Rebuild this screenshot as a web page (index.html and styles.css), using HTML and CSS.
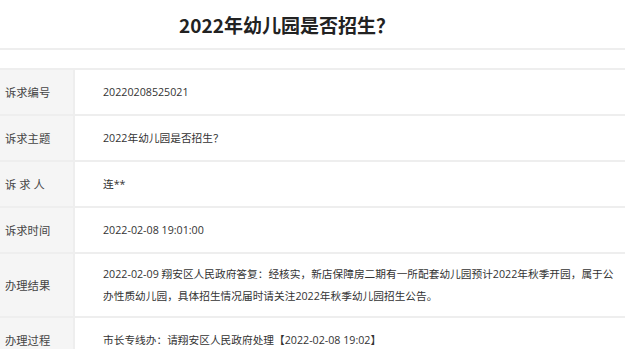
FILE: index.html
```html
<!DOCTYPE html>
<html lang="zh">
<head>
    <meta charset="UTF-8">
    <meta name="viewport" content="width=device-width, initial-scale=1.0">
    <link rel="stylesheet" href="styles.css">
</head>
<body>
    <div class="detail">
        <div class="detail-head">
            <h1 class="detail-title">2022年幼儿园是否招生？</h1>
        </div>
        <div class="detail-gap"></div>
        <div class="info-table">
            <div class="info-row">
                <div class="info-label">诉求编号</div>
                <div class="info-value">20220208525021</div>
            </div>
            <div class="info-row">
                <div class="info-label">诉求主题</div>
                <div class="info-value">2022年幼儿园是否招生？</div>
            </div>
            <div class="info-row">
                <div class="info-label spaced">诉 求 人</div>
                <div class="info-value">连**</div>
            </div>
            <div class="info-row">
                <div class="info-label">诉求时间</div>
                <div class="info-value">2022-02-08 19:01:00</div>
            </div>
            <div class="info-row tall">
                <div class="info-label">办理结果</div>
                <div class="info-value">2022-02-09 翔安区人民政府答复：经核实，新店保障房二期有一所配套幼儿园预计2022年秋季开园，属于公办性质幼儿园，具体招生情况届时请关注2022年秋季幼儿园招生公告。</div>
            </div>
            <div class="info-row">
                <div class="info-label">办理过程</div>
                <div class="info-value">市长专线办：请翔安区人民政府处理【2022-02-08 19:02】</div>
            </div>
        </div>
    </div>
</body>
</html>
```

FILE: styles.css
```css
body {
    margin: 0;
    background: #fff;
    font-family: "Open Sans", "Noto Sans CJK SC", sans-serif;
    color: #333;
}
.detail {
    width: 100%;
}
.detail-head {
    height: 48px;
    border-bottom: 2px solid #eeeeee;
    display: flex;
    align-items: center;
    justify-content: center;
    padding-right: 51px;
}
.detail-title {
    margin: 0;
    font-family: "Noto Sans CJK SC", sans-serif;
    font-size: 19px;
    font-weight: bold;
    color: #222;
}
.detail-gap {
    height: 18px;
    border-bottom: 2px solid #eeeeee;
}
.info-row {
    display: flex;
    min-height: 44px;
    border-bottom: 2px solid #eeeeee;
}
.info-row.tall {
    min-height: 62px;
}
.info-label {
    width: 75px;
    flex-shrink: 0;
    background: #f5f5f5;
    border-right: 2px solid #eeeeee;
    box-sizing: border-box;
    padding-left: 5px;
    display: flex;
    align-items: center;
    font-size: 11.3px;
    color: #444;
}
.info-label.spaced {
    white-space: pre;
}
.info-value {
    flex: 1;
    padding: 9px 4px 9px 28px;
    display: flex;
    align-items: center;
    font-size: 10.7px;
    line-height: 22px;
    color: #333;
}
```
